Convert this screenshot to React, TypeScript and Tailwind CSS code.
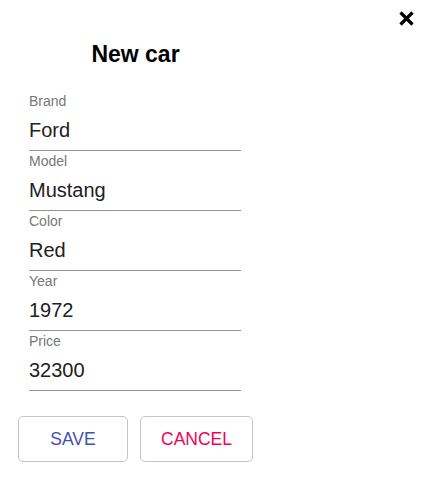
import React from 'react'

const fields = [
  { label: 'Brand', value: 'Ford' },
  { label: 'Model', value: 'Mustang' },
  { label: 'Color', value: 'Red' },
  { label: 'Year', value: '1972' },
  { label: 'Price', value: '32300' },
]

function Field({ label, value }: { label: string; value: string }) {
  return (
    <div className="w-[212px] flex flex-col">
      <label className="h-[20px] text-[14px] leading-[20px] text-[#777777]">{label}</label>
      <div className="h-[40px] flex items-center border-b border-[#949494] text-[20px] leading-[23px] text-[#212121]">
        {value}
      </div>
    </div>
  )
}

export default function App() {
  return (
    <div className="w-[426px] h-[482px] bg-white font-['Liberation_Sans',Arial,sans-serif]">
      {/* close */}
      <div className="h-[40px] flex justify-end pr-[11px] pt-[10px]">
        <button className="w-[17px] h-[17px] text-black" aria-label="close">
          <svg viewBox="0 0 17 17" width="17" height="17">
            <path d="M2.5 2.5 L14.5 14.5 M14.5 2.5 L2.5 14.5" stroke="currentColor" strokeWidth="3.2" />
          </svg>
        </button>
      </div>

      <div className="ml-[18px] w-[235px] flex flex-col">
        <h2 className="self-center h-[28px] text-[23px] leading-[28px] font-bold text-black">New car</h2>

        <div className="mt-[23px] ml-[11px] flex flex-col">
          {fields.map((f) => (
            <Field key={f.label} label={f.label} value={f.value} />
          ))}
        </div>

        <div className="mt-[25px] flex gap-[12px]">
          <button className="w-[110px] h-[46px] border border-[#c4c4c4] rounded-[5px] text-[17.5px] text-[#3f51b5]">
            SAVE
          </button>
          <button className="w-[113px] h-[46px] border border-[#c4c4c4] rounded-[5px] text-[17.5px] text-[#f50057]">
            CANCEL
          </button>
        </div>
      </div>
    </div>
  )
}
